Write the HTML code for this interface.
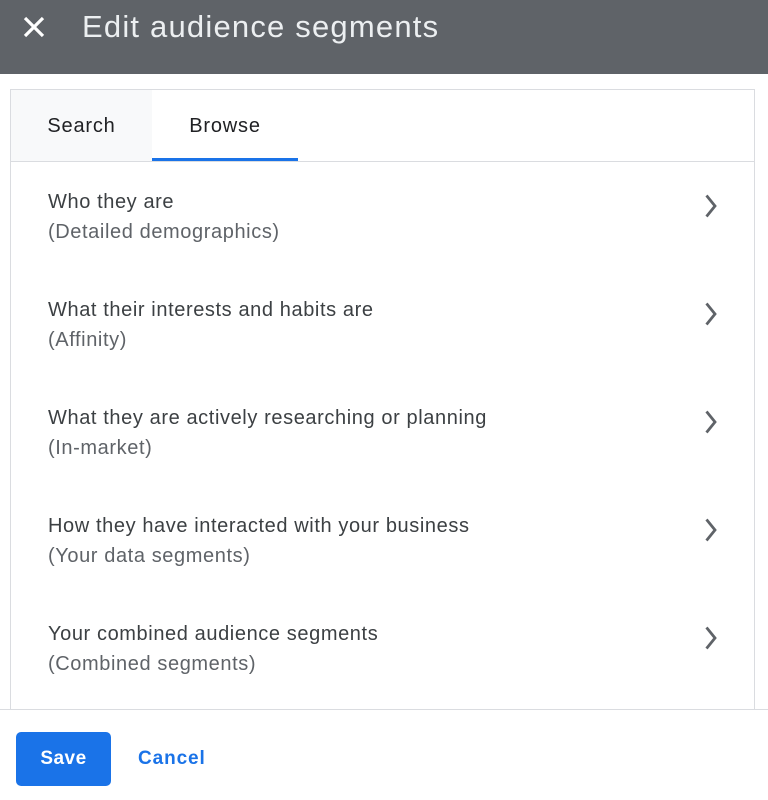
<!DOCTYPE html>
<html><head><style>
body{margin:0;width:768px;height:799px;background:#fff;font-family:"Liberation Sans",sans-serif;position:relative;overflow:hidden}
.hdr{position:absolute;left:0;top:0;width:768px;height:74px;background:#5f6368}
.hdr .t{position:absolute;left:82px;top:9px;font-size:31px;color:#eceff1;letter-spacing:1.2px}
.panel{position:absolute;left:10px;top:89px;width:743px;height:640px;border:1px solid #dadce0;border-bottom:none}
.tabs{position:absolute;left:0;top:0;width:743px;height:71px;border-bottom:1px solid #dadce0}
.tab{position:absolute;top:0;height:71px;line-height:73px;font-size:20px;color:#202124;text-align:center;letter-spacing:0.8px}
.row{position:absolute;left:37px;font-size:20px;letter-spacing:0.6px}
.row .a{color:#3c4043;line-height:30px}
.row .b{color:#5f6368;line-height:30px}
.chev{position:absolute;left:694px}
.foot{position:absolute;left:0;top:709px;width:768px;border-top:1px solid #dadce0;height:90px;background:#fff}
.save{position:absolute;left:16px;top:22px;width:95px;height:54px;background:#1a73e8;border-radius:5px;color:#fff;font-size:19px;font-weight:bold;text-align:center;line-height:54px;letter-spacing:0.5px}
.cancel{position:absolute;left:138px;top:22px;line-height:54px;font-size:19px;color:#1a73e8;font-weight:bold;letter-spacing:0.9px}
</style></head><body>
<div class="hdr">
<svg style="position:absolute;left:23px;top:16px" width="22" height="22" viewBox="0 0 22 22"><path d="M2 2L20 20M20 2L2 20" stroke="#fff" stroke-width="3.2"/></svg>
<div class="t">Edit audience segments</div></div>
<div class="panel">
<div class="tabs">
<div class="tab" style="left:0;width:141px;background:#f8f9fa">Search</div>
<div class="tab" style="left:141px;width:146px">Browse</div>
<div style="position:absolute;left:141px;top:68px;width:146px;height:3px;background:#1a73e8"></div>
</div>
<div class="row" style="top:97px"><div class="a">Who they are</div><div class="b">(Detailed demographics)</div></div>
<div class="row" style="top:205px"><div class="a">What their interests and habits are</div><div class="b">(Affinity)</div></div>
<div class="row" style="top:313px"><div class="a">What they are actively researching or planning</div><div class="b">(In-market)</div></div>
<div class="row" style="top:421px"><div class="a">How they have interacted with your business</div><div class="b">(Your data segments)</div></div>
<div class="row" style="top:529px"><div class="a">Your combined audience segments</div><div class="b">(Combined segments)</div></div>
<svg class="chev" style="top:104px" width="12" height="24" viewBox="0 0 12 24"><path d="M1.5 1.5L10 12L1.5 22.5" fill="none" stroke="#5f6368" stroke-width="2.8"/></svg>
<svg class="chev" style="top:212px" width="12" height="24" viewBox="0 0 12 24"><path d="M1.5 1.5L10 12L1.5 22.5" fill="none" stroke="#5f6368" stroke-width="2.8"/></svg>
<svg class="chev" style="top:320px" width="12" height="24" viewBox="0 0 12 24"><path d="M1.5 1.5L10 12L1.5 22.5" fill="none" stroke="#5f6368" stroke-width="2.8"/></svg>
<svg class="chev" style="top:428px" width="12" height="24" viewBox="0 0 12 24"><path d="M1.5 1.5L10 12L1.5 22.5" fill="none" stroke="#5f6368" stroke-width="2.8"/></svg>
<svg class="chev" style="top:536px" width="12" height="24" viewBox="0 0 12 24"><path d="M1.5 1.5L10 12L1.5 22.5" fill="none" stroke="#5f6368" stroke-width="2.8"/></svg>
</div>
<div class="foot"><div class="save">Save</div><div class="cancel">Cancel</div></div>
</body></html>
